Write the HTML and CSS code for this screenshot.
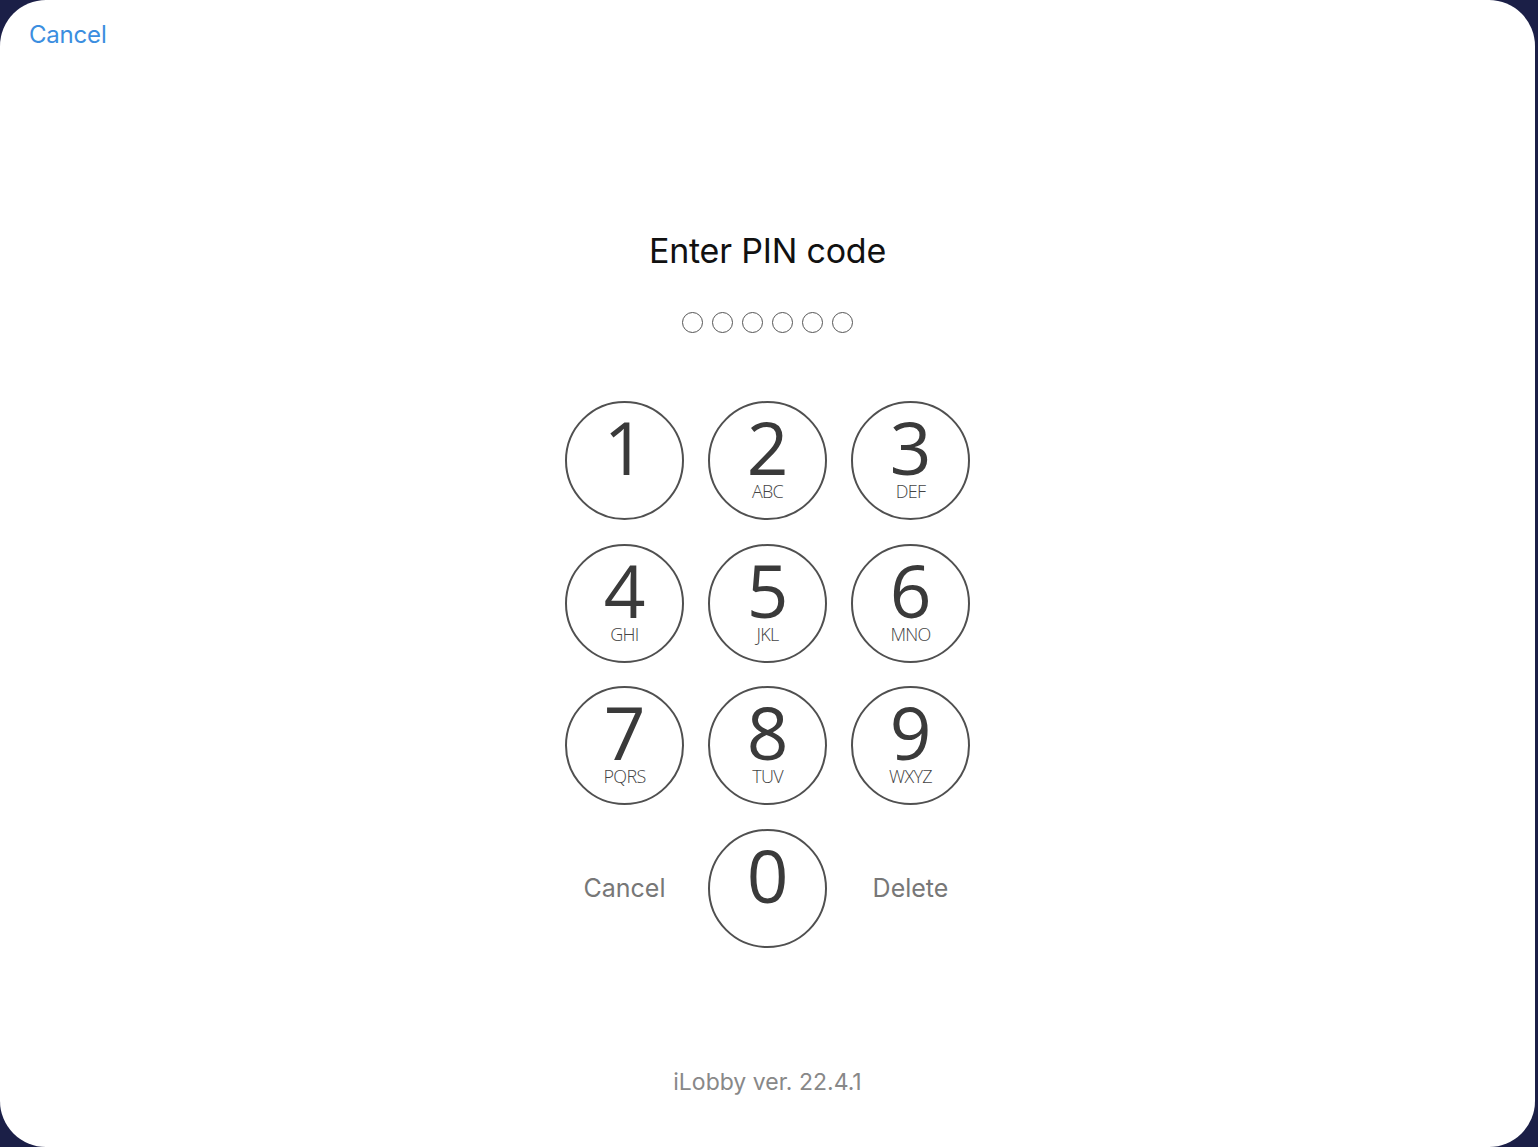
FILE: index.html
```html
<!DOCTYPE html>
<html lang="en">
<head>
    <meta charset="utf-8">
    <title>iLobby - Enter PIN code</title>
    <link rel="stylesheet" href="styles.css">
</head>
<body>
    <div class="sheet">
        <div class="top-bar">
            <a class="top-cancel" href="#">Cancel</a>
        </div>

        <div class="pin-area">
            <h1 class="pin-title">Enter PIN code</h1>

            <div class="pin-dots">
                <span class="dot"></span>
                <span class="dot"></span>
                <span class="dot"></span>
                <span class="dot"></span>
                <span class="dot"></span>
                <span class="dot"></span>
            </div>

            <div class="keypad">
                <button class="key"><span class="digit">1</span></button>
                <button class="key"><span class="digit">2</span><span class="letters">ABC</span></button>
                <button class="key"><span class="digit">3</span><span class="letters">DEF</span></button>
                <button class="key"><span class="digit">4</span><span class="letters">GHI</span></button>
                <button class="key"><span class="digit">5</span><span class="letters">JKL</span></button>
                <button class="key"><span class="digit">6</span><span class="letters">MNO</span></button>
                <button class="key"><span class="digit">7</span><span class="letters">PQRS</span></button>
                <button class="key"><span class="digit">8</span><span class="letters">TUV</span></button>
                <button class="key"><span class="digit">9</span><span class="letters">WXYZ</span></button>
                <button class="text-key">Cancel</button>
                <button class="key"><span class="digit">0</span></button>
                <button class="text-key">Delete</button>
            </div>
        </div>

        <div class="version">iLobby ver. 22.4.1</div>
    </div>
</body>
</html>
```

FILE: styles.css
```css
* { margin: 0; padding: 0; box-sizing: border-box; }
body {
    background: #1b1f47;
    height: 1147px;
    overflow: hidden;
    font-family: 'Inter', 'Liberation Sans', sans-serif;
}
.sheet {
    width: 1535px;
    height: 1147px;
    background: #fff;
    border-radius: 46px;
    display: flex;
    flex-direction: column;
}
.top-bar {
    padding: 20px 29px 0;
    height: 62px;
}
.top-cancel {
    color: #3b8ee0;
    text-decoration: none;
    font-size: 24px;
    letter-spacing: -0.2px;
}
.pin-area {
    display: flex;
    flex-direction: column;
    align-items: center;
    padding-top: 169px;
}
.pin-title {
    font-weight: 400;
    font-size: 34px;
    line-height: 40px;
    color: #111;
    letter-spacing: -0.2px;
}
.pin-dots {
    display: flex;
    gap: 9px;
    margin-top: 41px;
}
.dot {
    width: 21px;
    height: 21px;
    border: 1.7px solid #555;
    border-radius: 50%;
}
.keypad {
    display: grid;
    grid-template-columns: repeat(3, 119px);
    grid-auto-rows: 119px;
    column-gap: 24px;
    row-gap: 23.5px;
    margin-top: 68px;
}
.key {
    width: 119px;
    height: 119px;
    border: 2px solid #505050;
    border-radius: 50%;
    background: #fff;
    display: flex;
    flex-direction: column;
    align-items: center;
    padding-top: 11px;
    font-family: 'Open Sans', sans-serif;
    color: #3a3a3a;
    cursor: pointer;
}
.digit {
    font-size: 73px;
    line-height: 66px;
    height: 66px;
    font-weight: 400;
}
.letters {
    font-size: 18px;
    line-height: 18px;
    font-weight: 300;
    letter-spacing: -0.7px;
    color: #444;
    margin-top: 2px;
}
.text-key {
    border: none;
    background: none;
    font-family: 'Inter', 'Liberation Sans', sans-serif;
    font-size: 25px;
    color: #777;
    cursor: pointer;
}
.version {
    margin-top: auto;
    margin-bottom: 51px;
    text-align: center;
    font-size: 23px;
    color: #888;
}
```
